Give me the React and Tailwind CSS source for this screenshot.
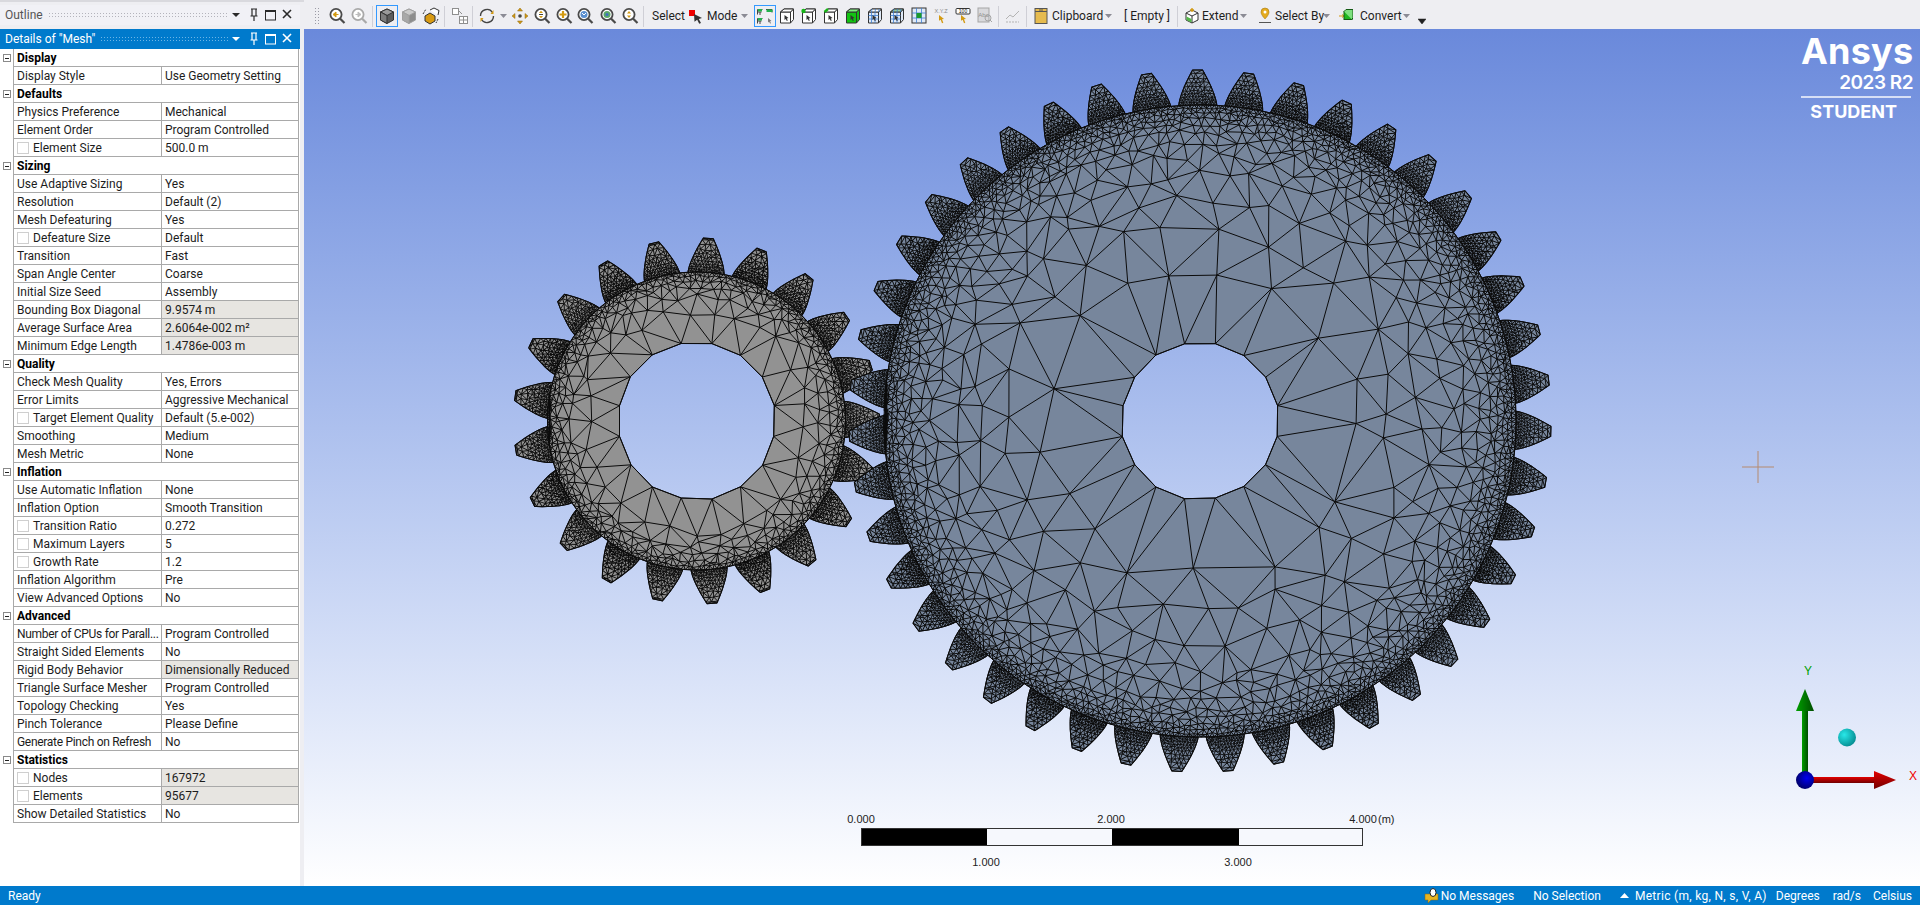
import React from 'react'

// ---- mesh generation (drawn, not laid out) ----
function rng(seed) {
  let s = seed
  return () => {
    s = (s * 1664525 + 1013904223) % 4294967296
    return s / 4294967296
  }
}

function delaunay(pts) {
  const order = pts.map((_, i) => i).sort((a, b) => pts[a][0] - pts[b][0])
  const all = pts.concat([[-1e4, -1e4], [2e4, -1e4], [0, 2e4]])
  const n = pts.length
  const mk = (a, b, c) => {
    const [ax, ay] = all[a], [bx, by] = all[b], [cx, cy] = all[c]
    const d = 2 * (ax * (by - cy) + bx * (cy - ay) + cx * (ay - by))
    const A = ax * ax + ay * ay, B = bx * bx + by * by, C = cx * cx + cy * cy
    const x = (A * (by - cy) + B * (cy - ay) + C * (ay - by)) / d
    const y = (A * (cx - bx) + B * (ax - cx) + C * (bx - ax)) / d
    return { a, b, c, x, y, r: (ax - x) ** 2 + (ay - y) ** 2 }
  }
  let open = [mk(n, n + 1, n + 2)]
  const closed = []
  for (const i of order) {
    const [px, py] = pts[i]
    const next = []
    const edges = new Map()
    for (const t of open) {
      const dx = px - t.x
      if (dx > 0 && dx * dx > t.r) { closed.push(t); continue }
      if (dx * dx + (py - t.y) ** 2 < t.r) {
        for (const [u, v] of [[t.a, t.b], [t.b, t.c], [t.c, t.a]]) {
          const k = u < v ? u + '_' + v : v + '_' + u
          edges.set(k, (edges.get(k) || 0) + 1)
        }
      } else next.push(t)
    }
    edges.forEach((cnt, k) => {
      if (cnt === 1) {
        const [u, v] = k.split('_').map(Number)
        next.push(mk(u, v, i))
      }
    })
    open = next
  }
  return closed.concat(open).filter(t => t.a < n && t.b < n && t.c < n)
}

function edgePath(pts, tris, keep) {
  const seen = new Set()
  let d = ''
  for (const t of tris) {
    const cx = (pts[t.a][0] + pts[t.b][0] + pts[t.c][0]) / 3
    const cy = (pts[t.a][1] + pts[t.b][1] + pts[t.c][1]) / 3
    if (!keep(cx, cy)) continue
    for (const [u, v] of [[t.a, t.b], [t.b, t.c], [t.c, t.a]]) {
      const k = u < v ? u * 100000 + v : v * 100000 + u
      if (seen.has(k)) continue
      seen.add(k)
      d += `M${pts[u][0].toFixed(1)} ${pts[u][1].toFixed(1)}L${pts[v][0].toFixed(1)} ${pts[v][1].toFixed(1)}`
    }
  }
  return d
}

function lerpTable(table, r) {
  for (let i = 0; i < table.length - 1; i++) {
    const [r0, h0] = table[i], [r1, h1] = table[i + 1]
    if (r <= r0 && r >= r1) return h1 + (h0 - h1) * (r - r1) / (r0 - r1)
  }
  return table[table.length - 1][1]
}

function buildGear({ root, tip, hole, holeSides, teeth, start, baseHalf, sizes, stopAt, seed }) {
  const rand = rng(seed)
  const holePts = []
  for (let i = 0; i < holeSides; i++) {
    const a = (i + 0.5) / holeSides * Math.PI * 2
    const rr = hole * (1 + (rand() - 0.5) * 0.015)
    holePts.push([Math.cos(a) * rr, Math.sin(a) * rr])
  }
  const pts = holePts.slice()
  let r = root
  while (r > stopAt) {
    const h = lerpTable(sizes, r)
    const n = Math.round(Math.PI * 2 * r / h)
    const off = rand() * 6.28
    for (let i = 0; i < n; i++) {
      const a = off + i / n * Math.PI * 2 + (r < root ? (rand() - 0.5) * 0.6 * h / r : 0)
      const rj = r === root ? root : r + (rand() - 0.5) * h * 0.5
      pts.push([Math.cos(a) * rj, Math.sin(a) * rj])
    }
    r -= h * 0.86
  }
  const inner = hole * Math.cos(Math.PI / holeSides) - 1
  const body = edgePath(pts, delaunay(pts), (x, y) => {
    const d = Math.hypot(x, y)
    return d > inner && d < root
  })
  const holeD = holePts.map((p, i) => (i ? 'L' : 'M') + p[0].toFixed(1) + ' ' + p[1].toFixed(1)).join('') + 'Z'

  // one tooth, y runs from the root towards the tip
  const h = tip - root
  const halfAt = t => 5 + (baseHalf - 5) * (1 - Math.pow(t, 1.4))
  const spacing = t => 2.3 + 3.5 * t
  const toothPts = []
  const rowsY = []
  let y = -2
  while (y < h) {
    rowsY.push(y)
    y += spacing(Math.max(y, 0) / h)
  }
  rowsY.push(h)
  const left = [], right = []
  rowsY.forEach(ry => {
    const t = Math.max(ry, 0) / h
    const w = halfAt(t)
    left.push([-w, -ry])
    right.push([w, -ry])
    toothPts.push([-w, -ry], [w, -ry])
    const s = spacing(t)
    for (let x = -w + s; x < w - s * 0.6; x += s) {
      if (ry === h) continue
      toothPts.push([x + (rand() - 0.5) * s * 0.5, -ry + (rand() - 0.5) * s * 0.5 * (ry > -2 ? 1 : 0)])
    }
  })
  const toothMesh = edgePath(toothPts, delaunay(toothPts), () => true)
  const toothFill = left.concat(right.reverse()).map((p, i) => (i ? 'L' : 'M') + p[0].toFixed(1) + ' ' + p[1].toFixed(1)).join('') + 'Z'
  const angles = []
  for (let i = 0; i < teeth; i++) angles.push(start + i * 360 / teeth)
  return { body, holeD, toothMesh, toothFill, angles, root }
}

const bigGear = buildGear({
  root: 316, tip: 351, hole: 79, holeSides: 16, teeth: 43, start: -0.4, baseHalf: 19,
  sizes: [[316, 4], [308, 6], [298, 9], [285, 13], [270, 19], [245, 28], [210, 40], [150, 58], [110, 65]],
  stopAt: 125, seed: 11,
})
const smallGear = buildGear({
  root: 149, tip: 183, hole: 79, holeSides: 16, teeth: 21, start: 3.7, baseHalf: 18,
  sizes: [[149, 4], [144, 6], [138, 9], [128, 15], [115, 22], [100, 30]],
  stopAt: 106, seed: 7,
})

function Gear({ g, cx, cy, fill }) {
  const ringD = `M${-g.root} 0A${g.root} ${g.root} 0 1 0 ${g.root} 0A${g.root} ${g.root} 0 1 0 ${-g.root} 0Z`
  return (
    <g transform={`translate(${cx} ${cy})`}>
      {g.angles.map(a => (
        <g key={a} transform={`rotate(${a}) translate(0 ${-g.root})`}>
          <path d={g.toothFill} fill={fill} stroke="#0b0b0b" />
          <path d={g.toothMesh} fill="none" stroke="#0b0b0b" strokeWidth="0.9" />
        </g>
      ))}
      <path d={ringD + g.holeD} fill={fill} fillRule="evenodd" stroke="#0b0b0b" />
      <path d={g.body} fill="none" stroke="#0b0b0b" strokeWidth="1" />
    </g>
  )
}

// ---- table data ----
const rows = [
  ['g', 'Display'],
  ['r', 'Display Style', 'Use Geometry Setting'],
  ['g', 'Defaults'],
  ['r', 'Physics Preference', 'Mechanical'],
  ['r', 'Element Order', 'Program Controlled'],
  ['c', 'Element Size', '500.0 m'],
  ['g', 'Sizing'],
  ['r', 'Use Adaptive Sizing', 'Yes'],
  ['r', 'Resolution', 'Default (2)'],
  ['r', 'Mesh Defeaturing', 'Yes'],
  ['c', 'Defeature Size', 'Default'],
  ['r', 'Transition', 'Fast'],
  ['r', 'Span Angle Center', 'Coarse'],
  ['r', 'Initial Size Seed', 'Assembly'],
  ['d', 'Bounding Box Diagonal', '9.9574 m'],
  ['d', 'Average Surface Area', '2.6064e-002 m²'],
  ['d', 'Minimum Edge Length', '1.4786e-003 m'],
  ['g', 'Quality'],
  ['r', 'Check Mesh Quality', 'Yes, Errors'],
  ['r', 'Error Limits', 'Aggressive Mechanical'],
  ['c', 'Target Element Quality', 'Default (5.e-002)'],
  ['r', 'Smoothing', 'Medium'],
  ['r', 'Mesh Metric', 'None'],
  ['g', 'Inflation'],
  ['r', 'Use Automatic Inflation', 'None'],
  ['r', 'Inflation Option', 'Smooth Transition'],
  ['c', 'Transition Ratio', '0.272'],
  ['c', 'Maximum Layers', '5'],
  ['c', 'Growth Rate', '1.2'],
  ['r', 'Inflation Algorithm', 'Pre'],
  ['r', 'View Advanced Options', 'No'],
  ['g', 'Advanced'],
  ['r', 'Number of CPUs for Parall...', 'Program Controlled'],
  ['r', 'Straight Sided Elements', 'No'],
  ['d', 'Rigid Body Behavior', 'Dimensionally Reduced'],
  ['r', 'Triangle Surface Mesher', 'Program Controlled'],
  ['r', 'Topology Checking', 'Yes'],
  ['r', 'Pinch Tolerance', 'Please Define'],
  ['r', 'Generate Pinch on Refresh', 'No'],
  ['g', 'Statistics'],
  ['cd', 'Nodes', '167972'],
  ['cd', 'Elements', '95677'],
  ['r', 'Show Detailed Statistics', 'No'],
]

function Row({ kind, name, value }) {
  if (kind === 'g') {
    return (
      <div className="flex h-[18px]">
        <div className="w-[13px] flex items-center pl-[3px]">
          <span className="w-[8px] h-[8px] border border-[#8a8a8a] bg-white flex items-center justify-center">
            <span className="w-[4px] h-px bg-[#222]" />
          </span>
        </div>
        <div className="flex-1 border-l border-b border-r border-[#a9a9a9] bg-white pl-[3px] font-bold text-black leading-[18px]">{name}</div>
      </div>
    )
  }
  const check = kind === 'c' || kind === 'cd'
  const grey = kind === 'd' || kind === 'cd'
  const tight = name.length > 24
  return (
    <div className="flex h-[18px]">
      <div className="w-[13px]" />
      <div className={`w-[148px] border-l border-b border-[#a9a9a9] bg-white pl-[3px] flex items-center text-[#1c1c1c] whitespace-nowrap ${tight ? 'tracking-[-0.3px]' : ''}`}>
        {check && <span className="w-[12px] h-[12px] border border-[#cfcfcf] mr-[4px] shrink-0" />}
        {name}
      </div>
      <div className={`flex-1 border-l border-b border-r border-[#a9a9a9] pl-[3px] flex items-center text-[#1c1c1c] whitespace-nowrap ${grey ? 'bg-[#e7e5e1]' : 'bg-white'}`}>
        {value}
      </div>
    </div>
  )
}

function PaneHeader({ title, active }) {
  const col = active ? '#ffffff' : '#2a2a2a'
  return (
    <div className={`flex items-center h-[20px] pl-[5px] pr-[7px] ${active ? 'bg-[#007acc] text-white' : 'bg-[#f1f1f6] text-[#555]'}`}>
      <span className="mr-[5px] whitespace-nowrap">{title}</span>
      <span className={`flex-1 h-[6px] bg-[length:3px_3px] ${active ? 'bg-[radial-gradient(#6db5e6_1px,transparent_1px)]' : 'bg-[radial-gradient(#b4b4bc_1px,transparent_1px)]'}`} />
      <svg width="62" height="16" viewBox="0 0 62 16" className="ml-[3px]">
        <path d="M1 6h8l-4 4z" fill={col} />
        <path d="M20 2h6M21 2v7M25 2v7M19.500 9h7M23 9v5" stroke={col} fill="none" strokeWidth="1.2" />
        <rect x="34.500" y="3.500" width="10" height="9.500" fill="none" stroke={col} />
        <path d="M34.500 4.500h10" stroke={col} />
        <path d="M52 3l8 8M60 3l-8 8" stroke={col} strokeWidth="1.600" />
      </svg>
    </div>
  )
}

// ---- toolbar icons ----
function Mag({ children, dim, className }) {
  const ring = dim ? '#a9a9a9' : '#4a4a4a'
  return (
    <svg width="18" height="18" viewBox="0 0 18 18" className={className}>
      <circle cx="8" cy="7.500" r="5.600" fill="#fff" stroke={ring} strokeWidth="1.800" />
      <path d="M12 11.500l4.500 4.500" stroke={ring} strokeWidth="2.200" />
      {children}
    </svg>
  )
}

function Cube({ className, c1 = '#7d7d7d', c2 = '#5c5c5c', c3 = '#9a9a9a', line = '#333' }) {
  return (
    <svg width="18" height="18" viewBox="0 0 18 18" className={className}>
      <path d="M9 2l6.500 3v8L9 16.500 2.500 13V5z" fill={c2} stroke={line} strokeLinejoin="round" />
      <path d="M9 2l6.500 3L9 8.500 2.500 5z" fill={c3} stroke={line} strokeLinejoin="round" />
      <path d="M2.500 5L9 8.500v8L2.500 13z" fill={c1} stroke={line} strokeLinejoin="round" />
    </svg>
  )
}

function SelBox({ className, fill = 'none', grid, top = '#fff', vertex, edge }) {
  return (
    <svg width="16" height="18" viewBox="0 0 16 18" className={className}>
      <path d="M1.500 5L5 2h9.500v10.500L11.500 16h-10z" fill={fill === 'none' ? '#fff' : fill} stroke="#333" />
      <path d="M1.500 5h10v11M11.500 5l3-3" fill="none" stroke="#333" />
      <path d="M1.500 5L5 2h9.500l-3 3z" fill={top} stroke="#333" />
      {grid && <path d="M4.500 5v11M8 5v11M1.500 8.500h10M1.500 12h10M5 2l-.5 3M8.500 2L8 5M12 2l-.5 3" stroke="#3f7fd0" strokeWidth="0.800" />}
      {vertex && <circle cx="2.500" cy="4" r="2.200" fill="#16b516" />}
      {edge && <path d="M1.500 5L5 2" stroke="#16b516" strokeWidth="2.400" />}
      <path d="M5.500 8l4 3-1.700.4 1 2.100-1 .4-1-2-1.300 1z" fill="#333" />
    </svg>
  )
}

const Caret = ({ className }) => (
  <svg width="7" height="4" viewBox="0 0 7 4" className={className}><path d="M0 0h7L3.500 4z" fill="#8b8b95" /></svg>
)
const Sep = ({ className }) => <span className={`w-px h-[21px] bg-[#cfcfd6] ${className}`} />

function Toolbar() {
  return (
    <div className="h-[29px] shrink-0 bg-[#eeeef2] flex items-center pt-[3px] text-[#1e1e1e]">
      <span className="ml-[10px] w-[5px] h-[18px] bg-[radial-gradient(#9a9aa5_1px,transparent_1px)] bg-[length:3px_3px]" />
      <Mag className="ml-[9px]"><path d="M10.500 7.500H7M8 5L5 7.500 8 10z" fill="#d39a12" stroke="#d39a12" /></Mag>
      <Mag dim className="ml-[4px]"><path d="M5.500 7.500H9M8 5l3 2.500L8 10z" fill="#bcbcbc" stroke="#bcbcbc" /></Mag>
      <Sep className="ml-[4px]" />
      <span className="ml-[3px] w-[22px] h-[22px] border border-[#3399ff] flex items-center justify-center"><Cube /></span>
      <Cube className="ml-[2px]" c1="#a8a8a8" c2="#8d8d8d" c3="#cacaca" line="#a0a0a0" />
      <svg width="18" height="18" viewBox="0 0 18 18" className="ml-[4px]">
        <path d="M3 9l5-3 5 3v5l-5 3-5-3z" fill="#d89a12" stroke="#333" />
        <path d="M8 3l4-2 5 2.500-1 4.500" fill="#fff" stroke="#333" />
        <path d="M1 7l3-5M16 12l-2 4" stroke="#333" strokeDasharray="2 1" />
      </svg>
      <Sep className="ml-[4px]" />
      <svg width="18" height="18" viewBox="0 0 18 18" className="ml-[6px]">
        <rect x="1.500" y="1.500" width="6" height="6" fill="#fff" stroke="#8f8f8f" />
        <rect x="8.500" y="9.500" width="8" height="7" fill="#fff" stroke="#8f8f8f" />
        <path d="M12.500 9.500v7M8.500 13h8M8 4l3 3" stroke="#8f8f8f" />
      </svg>
      <Sep className="ml-[3px]" />
      <svg width="18" height="18" viewBox="0 0 18 18" className="ml-[5px]">
        <path d="M2.500 9a6.500 6.500 0 0 1 12-3.500" fill="none" stroke="#444" strokeWidth="1.400" />
        <path d="M15.500 9a6.500 6.500 0 0 1-12 3.500" fill="none" stroke="#444" strokeWidth="1.400" />
        <path d="M15.500 3v4h-3zM2.500 15v-4h3z" fill="#d39a12" />
      </svg>
      <Caret className="ml-[4px]" />
      <svg width="18" height="18" viewBox="0 0 18 18" className="ml-[4px]">
        <path d="M9 1l2.500 3h-5zM9 17l-2.500-3h5zM1 9l3-2.500v5zM17 9l-3 2.500v-5z" fill="#d39a12" stroke="#8a6410" strokeWidth="0.500" />
        <circle cx="9" cy="9" r="1.800" fill="#444" />
      </svg>
      <Mag className="ml-[4px]"><path d="M8 3.800l2 2.200H6zM8 11.200L6 9h4z" fill="#d39a12" /><path d="M6 7.500h4" stroke="#444" /></Mag>
      <Mag className="ml-[4px]"><path d="M8 4v7M4.500 7.500h7" stroke="#d39a12" strokeWidth="2.200" /></Mag>
      <Mag className="ml-[3px]"><circle cx="8" cy="7.500" r="3.500" fill="#5a8fd0" /><path d="M6 6l2 2 2-2" stroke="#fff" fill="none" /></Mag>
      <Mag className="ml-[5px]"><circle cx="8" cy="7.500" r="3.500" fill="#5aa86a" /><circle cx="8" cy="7.500" r="1.500" fill="#3f6fc0" /></Mag>
      <Mag className="ml-[4px]"><path d="M8 4l2 2.500H6zM8 11L6 8.500h4z" fill="#d39a12" /></Mag>
      <Sep className="ml-[4px]" />
      <span className="ml-[8px] w-[31px] whitespace-nowrap">Select</span>
      <svg width="15" height="16" viewBox="0 0 15 16" className="ml-[6px]">
        <rect x="0" y="2" width="6" height="6" fill="#ee0000" />
        <path d="M5 6l8 4-3.200 1 2.200 4-1.800.8-2-4-2.700 2z" fill="#333" />
      </svg>
      <span className="ml-[3px] w-[32px] whitespace-nowrap">Mode</span>
      <Caret className="ml-[2px]" />
      <span className="ml-[6px] w-[22px] h-[22px] border border-[#3399ff] flex items-center justify-center">
        <svg width="18" height="18" viewBox="0 0 18 18">
          <path d="M1.500 2.500h5M1.500 2.500v5M1.500 5h4M4 5v3M1.500 11.500h5M1.500 11.500v5M1.500 14h4M4 14v3M10 2.500h6v3" fill="none" stroke="#444" />
          <path d="M2 2h4v2.500H2zM10.500 2.500h6V5h-6zM2 11h4v2.500H2z" fill="#22b14c" />
          <path d="M12 11l3.500 3-1.500.3 1 1.900-.9.4-1-1.900-1 .8z" fill="#777" />
        </svg>
      </span>
      <SelBox className="ml-[3px]" />
      <SelBox className="ml-[6px]" vertex />
      <SelBox className="ml-[6px]" edge />
      <SelBox className="ml-[6px]" fill="#12c312" top="#7ff07f" />
      <SelBox className="ml-[6px]" grid fill="#dfe9f7" />
      <SelBox className="ml-[6px]" grid fill="#dfe9f7" top="#9fd19f" />
      <svg width="16" height="18" viewBox="0 0 16 18" className="ml-[6px]">
        <rect x="1" y="1" width="14" height="15" fill="#dfe9f7" stroke="#333" />
        <path d="M5.500 1v15M10.500 1v15M1 6h14M1 11h14" stroke="#3f7fd0" strokeWidth="0.800" />
        <rect x="5.500" y="6" width="5" height="5" fill="#1a9a2c" />
      </svg>
      <svg width="16" height="18" viewBox="0 0 16 18" className="ml-[6px]">
        <text x="8" y="6" fontSize="5.500" textAnchor="middle" fill="#8a8a8a" className="font-['Liberation_Sans',sans-serif]">X.Y.Z</text>
        <path d="M6 8l5 4-2 .3 1.300 3.500-1.300.5-1.300-3.500-1.700 1z" fill="#d39a12" />
      </svg>
      <svg width="16" height="18" viewBox="0 0 16 18" className="ml-[6px]">
        <rect x="1" y="1.500" width="14" height="5.500" rx="1" fill="#fff" stroke="#333" />
        <text x="8" y="6" fontSize="5" textAnchor="middle" fill="#111" className="font-['Liberation_Sans',sans-serif]">100</text>
        <path d="M6 8l5 4-2 .3 1.300 3.500-1.300.5-1.300-3.500-1.700 1z" fill="#d39a12" />
      </svg>
      <svg width="16" height="18" viewBox="0 0 16 18" className="ml-[6px]">
        <rect x="1" y="1" width="11" height="14" fill="#d9d9dc" stroke="#a5a5a5" />
        <text x="6.500" y="10" fontSize="6" textAnchor="middle" fill="#8f8f8f" className="font-['Liberation_Sans',sans-serif]">Abc</text>
        <circle cx="11" cy="11" r="3" fill="none" stroke="#a5a5a5" />
        <path d="M13 13l2 2" stroke="#a5a5a5" />
      </svg>
      <Sep className="ml-[5px]" />
      <svg width="16" height="18" viewBox="0 0 16 18" className="ml-[6px]">
        <path d="M1 12l4-4 3 2 6-6" fill="none" stroke="#b3b3b3" />
        <path d="M1 15h13" stroke="#b3b3b3" strokeDasharray="2 1" />
      </svg>
      <Sep className="ml-[5px]" />
      <svg width="14" height="18" viewBox="0 0 14 18" className="ml-[7px]">
        <rect x="1" y="1.500" width="12" height="15" fill="#e6bb4e" stroke="#555" />
        <path d="M1 4.500h12M5 3h4" stroke="#555" />
      </svg>
      <span className="ml-[4px] w-[51px] whitespace-nowrap">Clipboard</span>
      <Caret className="ml-[2px]" />
      <span className="ml-[12px] w-[46px] whitespace-nowrap">[ Empty ]</span>
      <Sep className="ml-[7px]" />
      <svg width="14" height="18" viewBox="0 0 14 18" className="ml-[7px]">
        <path d="M1 6l6-3 6 3v7l-6 3-6-3z" fill="#fff" stroke="#333" />
        <path d="M1 6l6 3 6-3M7 9v7" fill="none" stroke="#333" />
        <path d="M1.500 9.500L6.500 12v3.500l-5-2.500z" fill="#52b848" />
        <path d="M7 1v4M5 3h4" stroke="#d39a12" strokeWidth="1.400" />
      </svg>
      <span className="ml-[3px] w-[36px] whitespace-nowrap">Extend</span>
      <Caret className="ml-[2px]" />
      <svg width="14" height="18" viewBox="0 0 14 18" className="ml-[11px]">
        <path d="M7 1a4 4 0 0 1 4 4c0 3-4 7-4 7S3 8 3 5a4 4 0 0 1 4-4z" fill="#e5ab1e" stroke="#a87a10" strokeWidth="0.600" />
        <circle cx="7" cy="5" r="1.500" fill="#fff" />
        <path d="M1 15.500h12" stroke="#555" />
      </svg>
      <span className="ml-[3px] w-[46px] whitespace-nowrap">Select By</span>
      <Caret className="ml-[2px]" />
      <svg width="14" height="18" viewBox="0 0 14 18" className="ml-[9px]">
        <path d="M0 9h4M3 7.500L5 9l-2 1.500" stroke="#d39a12" fill="none" />
        <rect x="5" y="4.500" width="8" height="8" fill="#1fb71f" stroke="#145a14" />
        <path d="M5 4.500l2-2h7v8l-1 2" fill="#7fe07f" stroke="#145a14" />
      </svg>
      <span className="ml-[7px] w-[41px] whitespace-nowrap">Convert</span>
      <Caret className="ml-[2px]" />
      <svg width="8" height="10" viewBox="0 0 8 10" className="ml-[8px] mt-[7px]"><path d="M0 4h8L4 9z" fill="#222" stroke="#222" strokeWidth="0.500" /></svg>
    </div>
  )
}

function ScaleBar() {
  return (
    <div className="absolute left-[557px] top-[785px] w-[502px] text-[11px] leading-none text-[#222] font-['Liberation_Sans',sans-serif]">
      <div className="relative h-[12px]">
        <span className="absolute left-0 -translate-x-1/2">0.000</span>
        <span className="absolute left-[250px] -translate-x-1/2">2.000</span>
        <span className="absolute left-[502px] -translate-x-1/2">4.000</span>
        <span className="absolute left-[517px]">(m)</span>
      </div>
      <div className="flex h-[18px] mt-[2px] border border-[#333] bg-[#f6f8fd]">
        <span className="w-[125px] bg-black" />
        <span className="w-[125px]" />
        <span className="w-[127px] bg-black" />
      </div>
      <div className="relative mt-[11px] h-[12px]">
        <span className="absolute left-[125px] -translate-x-1/2">1.000</span>
        <span className="absolute left-[377px] -translate-x-1/2">3.000</span>
      </div>
    </div>
  )
}

function Triad() {
  return (
    <svg width="180" height="160" viewBox="0 0 180 160" className="absolute left-[1436px] top-[621px]">
      <defs>
        <linearGradient id="gy" x1="0" x2="1" y1="0" y2="0">
          <stop offset="0" stopColor="#00a000" /><stop offset="1" stopColor="#004d00" />
        </linearGradient>
        <linearGradient id="rx" x1="0" x2="0" y1="0" y2="1">
          <stop offset="0" stopColor="#e40000" /><stop offset="1" stopColor="#700000" />
        </linearGradient>
        <radialGradient id="bs" cx="0.6" cy="0.4" r="0.7">
          <stop offset="0" stopColor="#0000f0" /><stop offset="1" stopColor="#00005a" />
        </radialGradient>
        <radialGradient id="cs" cx="0.35" cy="0.35" r="0.8">
          <stop offset="0" stopColor="#28e8e8" /><stop offset="1" stopColor="#007f85" />
        </radialGradient>
      </defs>
      <text x="68" y="25" fontSize="12" textAnchor="middle" fill="#00a000" className="font-['Liberation_Sans',sans-serif]">Y</text>
      <text x="173" y="130" fontSize="12" textAnchor="middle" fill="#f00000" className="font-['Liberation_Sans',sans-serif]">X</text>
      <rect x="62" y="58" width="6" height="70" fill="url(#gy)" />
      <path d="M65 39l9 22H56z" fill="url(#gy)" />
      <rect x="70" y="127" width="65" height="6" fill="url(#rx)" />
      <path d="M134 121l22 9-22 9z" fill="url(#rx)" />
      <circle cx="65" cy="130" r="9" fill="url(#bs)" />
      <circle cx="107" cy="87.500" r="9" fill="url(#cs)" />
    </svg>
  )
}

export default function App() {
  return (
    <div className="w-[1920px] h-[905px] overflow-hidden flex flex-col bg-[#eeeef2] text-[12px] font-['Roboto',sans-serif]">
      <div className="flex flex-1 min-h-0">
        <aside className="w-[304px] shrink-0 pt-[3px] pr-[4px] border-t-2 border-[#d9d9de]">
          <PaneHeader title="Outline" />
          <div className="h-[4px]" />
          <PaneHeader title={'Details of "Mesh"'} active />
          <div className="bg-white h-[837px] pr-px">
            {rows.map(([kind, name, value]) => (
              <Row key={name} kind={kind} name={name} value={value} />
            ))}
          </div>
        </aside>
        <main className="flex-1 flex flex-col min-w-0">
          <Toolbar />
          <div className="relative flex-1 bg-gradient-to-b from-[#6a89db] to-white">
            <svg className="absolute inset-0" width="1616" height="857" viewBox="304 29 1616 857">
              <Gear g={smallGear} cx={696.500} cy={421} fill="#929292" />
              <Gear g={bigGear} cx={1200} cy={421} fill="#77869c" />
              <path d="M1758 451v32M1742 467h32" stroke="#b58a6e" />
            </svg>
            <div className="absolute right-[7px] top-[4px] w-[112px] text-white text-right font-['Inter',sans-serif]">
              <div className="text-[36px] font-bold leading-[36px] tracking-[0.2px]">Ansys</div>
              <div className="text-[19px] font-semibold leading-[20px] mt-[4px] tracking-[-0.5px]">2023 R2</div>
              <div className="h-[2px] bg-white/70 mt-[3px] mr-[2px]" />
              <div className="text-[18px] font-bold leading-[20px] mt-[4px] pr-[16px]">STUDENT</div>
            </div>
            <ScaleBar />
            <Triad />
          </div>
        </main>
      </div>
      <footer className="h-[19px] shrink-0 bg-[#007acc] text-white flex items-center pl-[8px] pr-[8px]">
        <span>Ready</span>
        <span className="ml-auto flex items-center">
          <svg width="16" height="15" viewBox="0 0 16 15" className="mr-px">
            <path d="M1 6h13v6H7l-3 3v-3H1z" fill="#e6b422" stroke="#8a6a10" strokeWidth="0.500" />
            <ellipse cx="9" cy="4.500" rx="3" ry="4" fill="#fff" stroke="#222" />
          </svg>
          <span>No Messages</span>
          <span className="ml-[19px]">No Selection</span>
          <svg width="9" height="5" viewBox="0 0 9 5" className="ml-[19px] mr-[6px]"><path d="M0 5h9L4.500 0z" fill="#fff" /></svg>
          <span className="tracking-[0.3px]">Metric (m, kg, N, s, V, A)</span>
          <span className="ml-[9px]">Degrees</span>
          <span className="ml-[13px]">rad/s</span>
          <span className="ml-[12px]">Celsius</span>
        </span>
      </footer>
    </div>
  )
}
